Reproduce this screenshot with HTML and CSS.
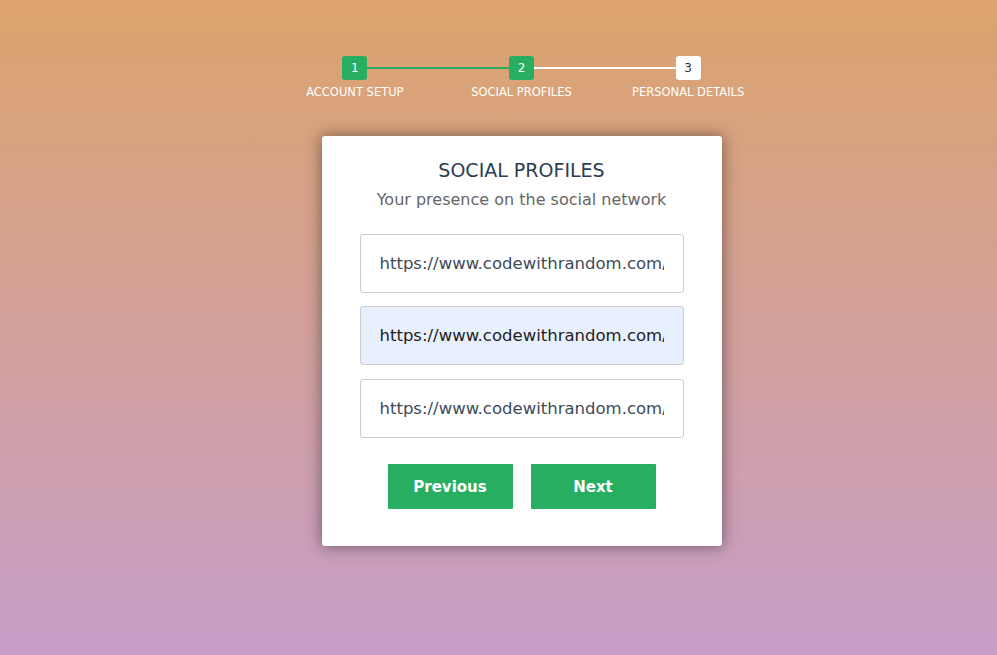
FILE: index.html
```html
<!DOCTYPE html>
<html lang="en">
<head>
    <meta charset="UTF-8">
    <meta name="viewport" content="width=device-width, initial-scale=1.0">
    <title>Multi Step Form</title>
    <link rel="stylesheet" href="styles.css">
</head>
<body>
    <div class="wrapper">
        <ul class="progressbar">
            <li class="active"><span class="step">1</span>Account Setup</li>
            <li class="active"><span class="step">2</span>Social Profiles</li>
            <li><span class="step">3</span>Personal Details</li>
        </ul>
        <form class="card">
            <h2 class="card-title">Social Profiles</h2>
            <h3 class="card-subtitle">Your presence on the social network</h3>
            <input type="text" class="field" value="https://www.codewithrandom.com/">
            <input type="text" class="field autofill" value="https://www.codewithrandom.com/">
            <input type="text" class="field" value="https://www.codewithrandom.com/">
            <div class="actions">
                <button type="button" class="btn">Previous</button>
                <button type="button" class="btn">Next</button>
            </div>
        </form>
    </div>
</body>
</html>
```

FILE: styles.css
```css
* {
    margin: 0;
    padding: 0;
    box-sizing: border-box;
    font-family: "DejaVu Sans", "Liberation Sans", sans-serif;
}
html {
    min-height: 100%;
    background: linear-gradient(rgb(220, 163, 108), rgb(199, 157, 200));
}
body {
    min-height: 655px;
    padding-left: 46px;
}
.wrapper {
    width: 500px;
    margin: 0 auto;
    padding-top: 56px;
}
.progressbar {
    list-style: none;
    display: flex;
    margin-bottom: 37px;
}
.progressbar li {
    flex: 1;
    position: relative;
    text-align: center;
    color: #fff;
    font-size: 11.5px;
    line-height: 14px;
    text-transform: uppercase;
}
.progressbar .step {
    display: block;
    width: 25px;
    height: 24px;
    line-height: 24px;
    margin: 0 auto 5px;
    border-radius: 3px;
    background: #fff;
    color: #333;
    font-size: 12px;
    position: relative;
    z-index: 1;
}
.progressbar li.active .step {
    background: #27AE60;
    color: #fff;
}
.progressbar li + li::after {
    content: "";
    position: absolute;
    height: 2px;
    width: 100%;
    top: 11px;
    left: -50%;
    background: #fff;
}
.progressbar li.active + li.active::after {
    background: #27AE60;
}
.card {
    width: 400px;
    margin: 0 auto;
    background: #fff;
    border-radius: 3px;
    box-shadow: 0 0 15px 1px rgba(0, 0, 0, 0.4);
    padding: 22px 38px 37px;
    text-align: center;
}
.card-title {
    font-size: 19px;
    line-height: 24px;
    font-weight: normal;
    text-transform: uppercase;
    color: #2C3E50;
}
.card-subtitle {
    font-size: 16px;
    line-height: 20px;
    font-weight: normal;
    color: #666;
    margin: 8px 0 24px;
}
.field {
    display: block;
    width: 100%;
    height: 59px;
    padding: 0 19px;
    margin-bottom: 13px;
    border: 1px solid #ccc;
    border-radius: 3px;
    font-size: 16.5px;
    color: #3d4b5a;
    background: #fff;
    outline: none;
}
.field + .field + .field {
    margin-top: 14px;
}
.field.autofill {
    background: #E8F0FE;
    color: #222;
}
.actions {
    display: flex;
    justify-content: center;
    gap: 18px;
    margin-top: 26px;
}
.btn {
    width: 125px;
    height: 45px;
    border: none;
    border-radius: 1px;
    background: #27AE60;
    color: #fff;
    font-size: 15px;
    font-weight: bold;
    cursor: pointer;
}
```
